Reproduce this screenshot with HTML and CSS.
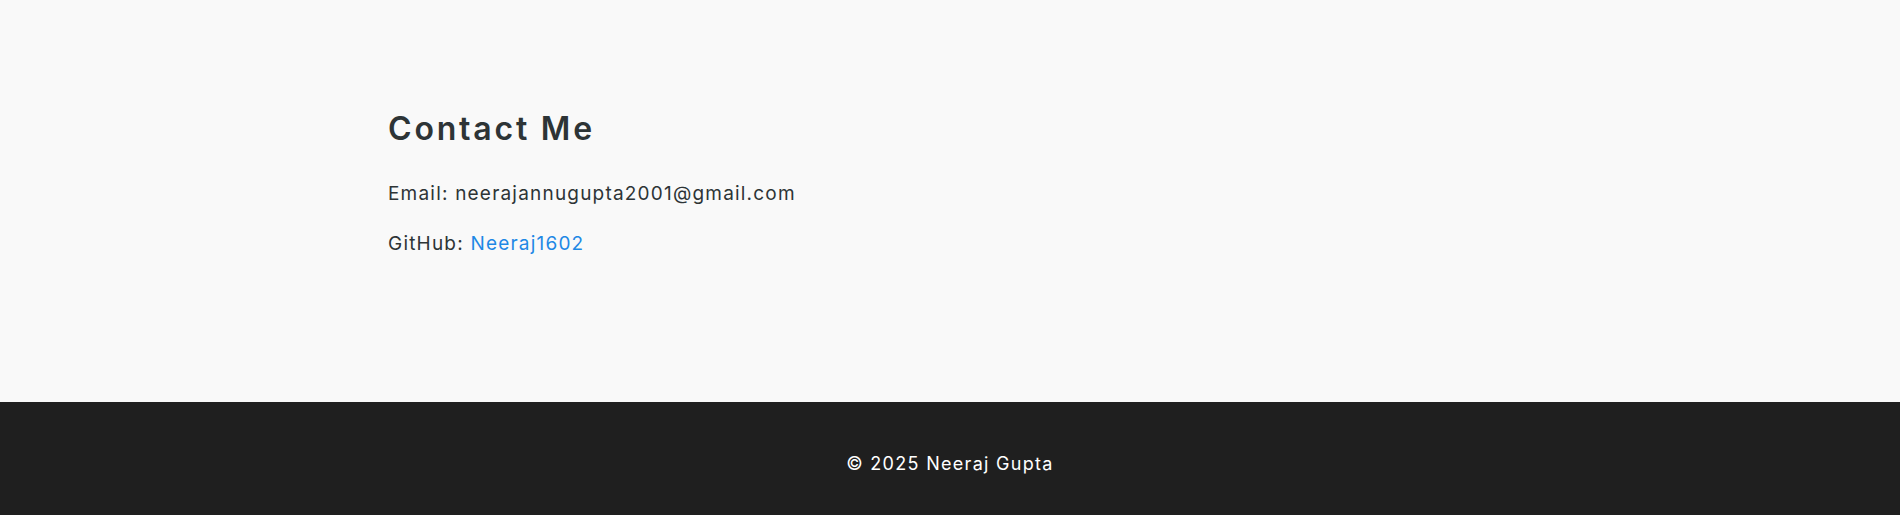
FILE: index.html
```html
<!DOCTYPE html>
<html lang="en">
<head>
<meta charset="utf-8">
<title>Contact Me</title>
<link rel="stylesheet" href="styles.css">
</head>
<body>
<main class="page">
  <section class="contact">
    <div class="container">
      <h2 class="contact-title">Contact Me</h2>
      <p class="contact-line">Email: neerajannugupta2001@gmail.com</p>
      <p class="contact-line">GitHub: <a class="contact-link" href="#">Neeraj1602</a></p>
    </div>
  </section>
</main>
<footer class="footer">
  <p class="footer-text">© 2025 Neeraj Gupta</p>
</footer>
</body>
</html>
```

FILE: styles.css
```css
* { box-sizing: border-box; }
html, body { margin: 0; padding: 0; }
body {
  font-family: Inter, "Open Sans", "Liberation Sans", sans-serif;
  background: #f9f9f9;
  color: #2d3436;
}
.page {
  height: 402px;
}
.contact {
  padding-top: 110px;
}
.container {
  max-width: 1124px;
  margin: 0 auto;
}
.contact-title {
  margin: 0 0 30px;
  font-size: 32px;
  font-weight: 600;
  line-height: 1.2;
  letter-spacing: 2.8px;
  color: #2d3436;
}
.contact-line {
  margin: 0 0 19px;
  font-size: 19px;
  line-height: 31px;
  letter-spacing: 1.2px;
  color: #2d3436;
}
.contact-link {
  color: #1e88e5;
  text-decoration: none;
}
.footer {
  background: #1f1f1f;
  height: 113px;
  padding-top: 12px;
  display: flex;
  align-items: center;
  justify-content: center;
}
.footer-text {
  margin: 0;
  color: #ffffff;
  font-size: 18px;
  line-height: 1.6;
  letter-spacing: 1.3px;
}
```
